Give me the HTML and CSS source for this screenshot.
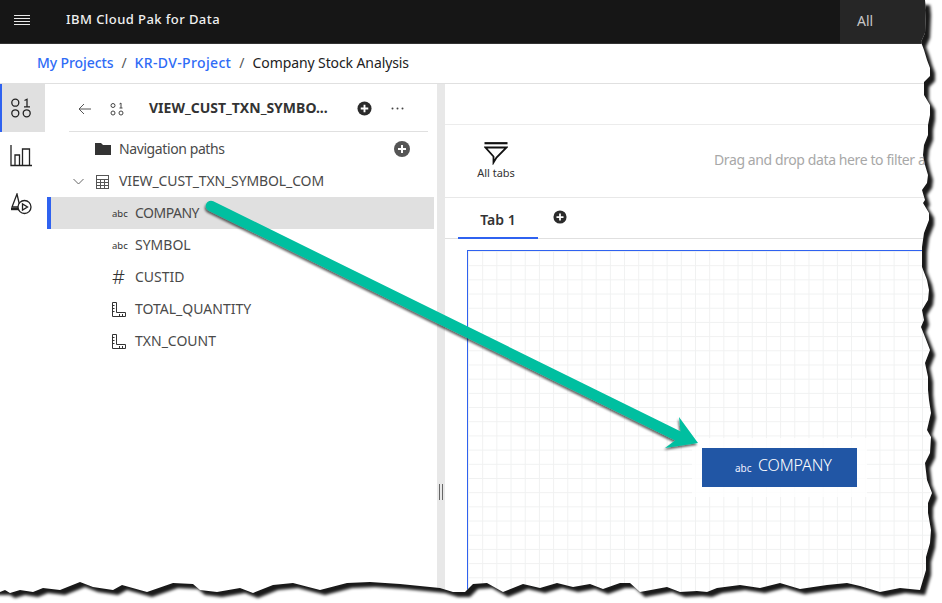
FILE: index.html
```html
<!DOCTYPE html>
<html lang="en">
<head>
  <meta charset="UTF-8" />
  <title>IBM Cloud Pak for Data</title>
  <link rel="stylesheet" href="styles.css">
</head>
<body>
  <div class="app">
    <header class="topbar">
      <button class="menu-btn" aria-label="Menu">
        <svg width="18" height="14" viewBox="0 0 18 14"><path d="M1 1.500h16M1 4.500h16M1 7.500h16M1 10.500h16" stroke="#e8e8e8" stroke-width="1" fill="none"/></svg>
      </button>
      <span class="product">IBM Cloud Pak for Data</span>
      <div class="search-scope">All</div>
    </header>

    <nav class="crumbs">
      <a class="crumb-first" href="#">My Projects</a><span class="sep">/</span>
      <a class="crumb-second" href="#">KR-DV-Project</a><span class="sep">/</span>
      <span class="crumb-current">Company Stock Analysis</span>
    </nav>

    <div class="workspace">
      <aside class="rail">
        <div class="rail-item active">
          <svg width="22" height="20" viewBox="0 0 22 20" fill="none" stroke="#222" stroke-width="1.300"><circle cx="5.300" cy="4.700" r="3.500"/><circle cx="5.300" cy="15.300" r="3.500"/><circle cx="16.700" cy="15.300" r="3.500"/><path d="M14.500 2.500l2.500-1.300v7.500M14 8.800h6"/></svg>
        </div>
        <div class="rail-item">
          <svg width="22" height="22" viewBox="0 0 22 22" fill="none" stroke="#222" stroke-width="1.300"><path d="M1 0v20.500h21"/><path d="M5 20.500V10h4.500v10.500M12.500 20.500V4h7v16.500"/></svg>
        </div>
        <div class="rail-item">
          <svg width="22" height="22" viewBox="0 0 22 22" fill="none" stroke="#222" stroke-width="1.300"><path d="M7 1L2 14h8z"/><path d="M1 16h8" stroke-width="2.400"/><circle cx="14.500" cy="14" r="6.500" fill="#fff"/><path d="M12.500 11v6l5-3z"/></svg>
        </div>
      </aside>

      <section class="tree-panel">
        <div class="panel-head">
          <svg class="back" width="14" height="12" viewBox="0 0 14 12" fill="none" stroke="#555" stroke-width="1"><path d="M13 6H1M6 1L1 6l5 5"/></svg>
          <svg class="head-ico" width="14" height="14" viewBox="0 0 14 14" fill="none" stroke="#444" stroke-width="1"><circle cx="3" cy="3.500" r="2"/><circle cx="3" cy="11" r="2"/><circle cx="11" cy="11" r="2"/><path d="M9.500 2l1.500-1v5M9.500 6h3"/></svg>
          <span class="head-title">VIEW_CUST_TXN_SYMBO...</span>
          <svg class="plus" width="15" height="15" viewBox="0 0 16 16"><circle cx="8" cy="8" r="7.500" fill="#2b2b2b"/><path d="M8 4v8M4 8h8" stroke="#fff" stroke-width="2"/></svg>
          <svg class="dots" width="13" height="3" viewBox="0 0 13 3"><circle cx="1.500" cy="1.500" r="1" fill="#444"/><circle cx="6.500" cy="1.500" r="1" fill="#444"/><circle cx="11.500" cy="1.500" r="1" fill="#444"/></svg>
        </div>
        <ul class="tree">
          <li class="row nav-row">
            <svg class="folder" width="16" height="12" viewBox="0 0 16 12"><path d="M0 0h6l2 2h8v10H0z" fill="#333"/></svg>
            <span class="nav-label">Navigation paths</span>
            <svg class="plus-grey" width="16" height="16" viewBox="0 0 16 16"><circle cx="8" cy="8" r="8" fill="#555"/><path d="M8 4v8M4 8h8" stroke="#fff" stroke-width="2"/></svg>
          </li>
          <li class="row table-row">
            <svg class="chev" width="11" height="7" viewBox="0 0 11 7" fill="none" stroke="#666"><path d="M.5 1l5 5 5-5"/></svg>
            <svg class="grid-ico" width="13" height="14" viewBox="0 0 13 14" fill="none" stroke="#555"><rect x=".5" y=".5" width="12" height="13"/><path d="M.5 4.500h12M.5 7.500h12M.5 10.500h12M4.500 4.500v9M8.500 4.500v9"/></svg>
            <span class="label">VIEW_CUST_TXN_SYMBOL_COM</span>
          </li>
          <li class="row field selected"><span class="abc">abc</span><span class="label tight">COMPANY</span></li>
          <li class="row field"><span class="abc">abc</span><span class="label">SYMBOL</span></li>
          <li class="row field"><span class="hash">#</span><span class="label">CUSTID</span></li>
          <li class="row field">
            <svg class="ruler" width="14" height="15" viewBox="0 0 14 15" fill="none" stroke="#333"><path d="M.5.500h4v10h9v4H.5zM.5 3.500h2M.5 6.500h2M.5 9.500h2M7.500 14v-2M10.500 14v-2"/></svg>
            <span class="label">TOTAL_QUANTITY</span>
          </li>
          <li class="row field">
            <svg class="ruler" width="14" height="15" viewBox="0 0 14 15" fill="none" stroke="#333"><path d="M.5.500h4v10h9v4H.5zM.5 3.500h2M.5 6.500h2M.5 9.500h2M7.500 14v-2M10.500 14v-2"/></svg>
            <span class="label">TXN_COUNT</span>
          </li>
        </ul>
      </section>

      <div class="splitter"><span class="grip"></span></div>

      <main class="board">
        <div class="board-top"></div>
        <div class="filter-bar">
          <div class="all-tabs">
            <svg width="24" height="23" viewBox="0 0 24 23" fill="none" stroke="#111"><path d="M.5 1.200h23" stroke-width="2.200"/><path d="M1.500 5.500h21L12.500 15.500l-3 5v-6z" stroke-width="1.800"/></svg>
            <span>All tabs</span>
          </div>
          <span class="drop-hint">Drag and drop data here to filter all tabs</span>
        </div>
        <div class="tabs">
          <div class="tab">Tab 1</div>
          <svg class="tab-add" width="14" height="14" viewBox="0 0 16 16"><circle cx="8" cy="8" r="7.500" fill="#2b2b2b"/><path d="M8 4v8M4 8h8" stroke="#fff" stroke-width="2"/></svg>
        </div>
        <div class="canvas">
          <div class="dropped"><span class="abc">abc</span><span class="dropped-label">COMPANY</span></div>
        </div>
      </main>
    </div>
  </div>

  <svg class="overlay" width="942" height="603" viewBox="0 0 942 603">
    <defs>
      <filter id="arrow-shadow" x="-10%" y="-10%" width="120%" height="120%"><feDropShadow dx="-1" dy="2" stdDeviation="1.200" flood-color="#000" flood-opacity=".6"/></filter>
    </defs>
    <g filter="url(#arrow-shadow)" fill="#00bfa0">
      <path d="M211 206L680 437" stroke="#00bfa0" stroke-width="10.500" stroke-linecap="round" fill="none"/>
      <path d="M679 417L698 443L665 448L681 436z"/>
    </g>
  </svg>

  <svg class="overlay" width="942" height="603" viewBox="0 0 942 603">
    <defs>
      <filter id="torn-blur" x="-5%" y="-5%" width="110%" height="110%"><feGaussianBlur stdDeviation="1.800"/></filter>
      <clipPath id="outside">
        <path d="M925 0L926 10L925 33L921 42L924 50L927 60L930 68L930 76L924 82L924 95L930 105L930 115L928 125L928 135L924 145L923 155L925 165L928 175L927 183L922 190L925 200L923 203L929 213L929 220L924 233L922 247L922 267L927 280L929 290L928 300L922 310L924 320L921 327L925 337L930 350L925 363L928 377L928 390L929 400L931 413L927 430L931 437L930 453L925 463L927 480L932 493L928 503L928 513L931 530L930 543L926 557L926 570L923 580L920 590L900 588L880 592L860 586L847 583L827 585L800 589L780 583L760 588L740 585L717 588L707 592L697 591L680 592L667 587L640 592L630 583L620 583L603 589L590 584L573 587L557 583L540 588L523 584L503 592L487 583L473 584L465 592L453 592L440 588L430 587L400 584L370 582L347 583L320 590L293 583L273 585L253 593L240 588L217 592L200 590L193 584L173 583L147 592L122 585L113 590L93 587L80 582L60 590L43 588L33 592L20 590L10 593L5 590L0 592L0 603L942 603L942 0z"/>
      </clipPath>
    </defs>
    <g clip-path="url(#outside)">
      <rect width="942" height="603" fill="#fff"/>
      <path filter="url(#torn-blur)" fill="#000" fill-opacity=".9" transform="translate(5 5)"
        d="M0 0L925 0L926 10L925 33L921 42L924 50L927 60L930 68L930 76L924 82L924 95L930 105L930 115L928 125L928 135L924 145L923 155L925 165L928 175L927 183L922 190L925 200L923 203L929 213L929 220L924 233L922 247L922 267L927 280L929 290L928 300L922 310L924 320L921 327L925 337L930 350L925 363L928 377L928 390L929 400L931 413L927 430L931 437L930 453L925 463L927 480L932 493L928 503L928 513L931 530L930 543L926 557L926 570L923 580L920 590L900 588L880 592L860 586L847 583L827 585L800 589L780 583L760 588L740 585L717 588L707 592L697 591L680 592L667 587L640 592L630 583L620 583L603 589L590 584L573 587L557 583L540 588L523 584L503 592L487 583L473 584L465 592L453 592L440 588L430 587L400 584L370 582L347 583L320 590L293 583L273 585L253 593L240 588L217 592L200 590L193 584L173 583L147 592L122 585L113 590L93 587L80 582L60 590L43 588L33 592L20 590L10 593L5 590L-8 590z"/>
    </g>
  </svg>
</body>
</html>
```

FILE: styles.css
```css
* {
  margin: 0;
  padding: 0;
  box-sizing: border-box;
}

html, body {
  width: 942px;
  height: 603px;
  overflow: hidden;
  background: #fff;
}

body {
  position: relative;
  font-family: "Noto Sans", Arial, sans-serif;
  color: #3d3d3d;
}

.app {
  display: flex;
  flex-direction: column;
  height: 603px;
}

.topbar {
  display: flex;
  align-items: center;
  height: 44px;
  flex: none;
  background: #161616;
  color: #f0f0f0;
  border-bottom: 1px solid #333;
}

.menu-btn {
  display: flex;
  align-items: center;
  justify-content: center;
  width: 44px;
  height: 43px;
  padding-bottom: 2px;
  background: none;
  border: none;
}

.product {
  margin-left: 22px;
  padding-bottom: 5px;
  font-size: 13px;
  font-weight: 500;
  letter-spacing: .43px;
}

.search-scope {
  display: flex;
  align-items: center;
  margin-left: auto;
  width: 102px;
  height: 43px;
  padding: 0 0 3px 17px;
  background: #262626;
  color: #c6c6c6;
  font-size: 14px;
}

.crumbs {
  display: flex;
  align-items: center;
  height: 40px;
  flex: none;
  padding: 0 0 2px 37px;
  font-size: 14px;
  color: #222;
  border-bottom: 1px solid #e0e0e0;
}

.crumbs a {
  color: #2f6cf6;
  font-weight: 500;
  text-decoration: none;
}

.crumb-first {
  letter-spacing: -.1px;
}

.crumb-second {
  letter-spacing: .35px;
}

.crumb-current {
  letter-spacing: -.1px;
}

.crumbs .sep {
  margin: 0 8px;
  color: #555;
}

.workspace {
  display: flex;
  flex: 1;
  min-height: 0;
}

.rail {
  width: 45px;
  flex: none;
}

.rail-item {
  display: flex;
  align-items: center;
  height: 48px;
  padding-left: 10px;
}

.rail-item.active {
  background: #e0e0e0;
  border-left: 2px solid #2f62f0;
  padding-left: 8px;
}

.tree-panel {
  width: 392px;
  flex: none;
}

.panel-head {
  display: flex;
  align-items: center;
  height: 48px;
  margin: 0 9px 0 24px;
  padding-top: 2px;
  border-bottom: 1px solid #e0e0e0;
}

.back {
  margin-left: 9px;
}

.head-ico {
  margin-left: 18px;
}

.head-title {
  margin-left: 25px;
  padding-bottom: 2px;
  width: 208px;
  font-size: 14px;
  font-weight: 700;
  color: #333;
  white-space: nowrap;
}

.dots {
  margin-left: 19px;
}

.tree {
  list-style: none;
}

.row {
  display: flex;
  align-items: center;
  height: 32px;
  font-size: 14px;
  color: #4a4a4a;
}

.label, .nav-label {
  padding-bottom: 2px;
}

.nav-label {
  letter-spacing: -.4px;
}

.tight {
  letter-spacing: -.5px;
}

.nav-row {
  height: 34px;
  padding-left: 50px;
}

.folder {
  margin-right: 8px;
}

.plus-grey {
  margin-left: auto;
  margin-right: 27px;
}

.table-row {
  height: 31px;
  padding-left: 28px;
}

.grid-ico {
  margin: 0 10px 0 12px;
}

.table-row .label {
  letter-spacing: -.12px;
}

.field {
  padding-left: 65px;
  margin-left: 2px;
}

.selected {
  height: 32px;
  background: #e0e0e0;
  box-shadow: -4px 0 0 #2f62f0;
  margin-left: 6px;
  padding-left: 61px;
  margin-right: 3px;
}

.abc {
  width: 23px;
  font-size: 9.500px;
  color: #333;
}

.hash {
  width: 23px;
  font-size: 20px;
  font-weight: 300;
  line-height: 1;
  color: #333;
}

.ruler {
  margin-right: 9px;
}

.splitter {
  position: relative;
  flex: none;
  width: 8px;
  background: #e8e8e8;
}

.grip {
  position: absolute;
  left: 2px;
  top: 400px;
  width: 4px;
  height: 16px;
  border-left: 1px solid #666;
  border-right: 1px solid #666;
}

.board {
  flex: 1;
  min-width: 0;
  overflow: hidden;
}

.board-top {
  height: 41px;
  border-bottom: 1px solid #ececec;
}

.filter-bar {
  display: flex;
  align-items: center;
  height: 73px;
  border-bottom: 1px solid #e8e8e8;
}

.all-tabs {
  display: flex;
  flex-direction: column;
  align-items: center;
  flex: none;
  width: 102px;
  font-size: 11px;
  color: #333;
}

.drop-hint {
  flex: none;
  margin: 0 0 3px 167px;
  font-size: 14px;
  letter-spacing: -.4px;
  color: #a8a8a8;
  white-space: nowrap;
}

.tabs {
  display: flex;
  align-items: flex-start;
  height: 41px;
  padding-left: 13px;
  border-bottom: 1px solid #e0e0e0;
}

.tab {
  width: 80px;
  height: 41px;
  padding-top: 12px;
  text-align: center;
  font-size: 14px;
  font-weight: 600;
  color: #333;
  border-bottom: 2px solid #2f62f0;
}

.tab-add {
  margin: 12px 0 0 15px;
}

.canvas {
  position: relative;
  margin: 11px 0 0 22px;
  height: 400px;
  border: 1px solid #2f62f0;
  background-image:
    linear-gradient(#f0f1f1 1px, transparent 1px),
    linear-gradient(90deg, #f0f1f1 1px, transparent 1px);
  background-size: 14.200px 14.200px;
}

.dropped {
  position: absolute;
  left: 234px;
  top: 197px;
  display: flex;
  align-items: center;
  width: 155px;
  height: 39px;
  padding-left: 33px;
  background: #2156a5;
  color: #fff;
  font-size: 16px;
  font-weight: 300;
  box-shadow: 0 0 0 10px rgba(255,255,255,.8);
}

.dropped .abc {
  color: #eef;
  width: 23px;
  font-size: 10px;
  font-weight: 400;
}

.dropped-label {
  padding-bottom: 5px;
  letter-spacing: -.1px;
}

.overlay {
  position: absolute;
  left: 0;
  top: 0;
  pointer-events: none;
}
```
